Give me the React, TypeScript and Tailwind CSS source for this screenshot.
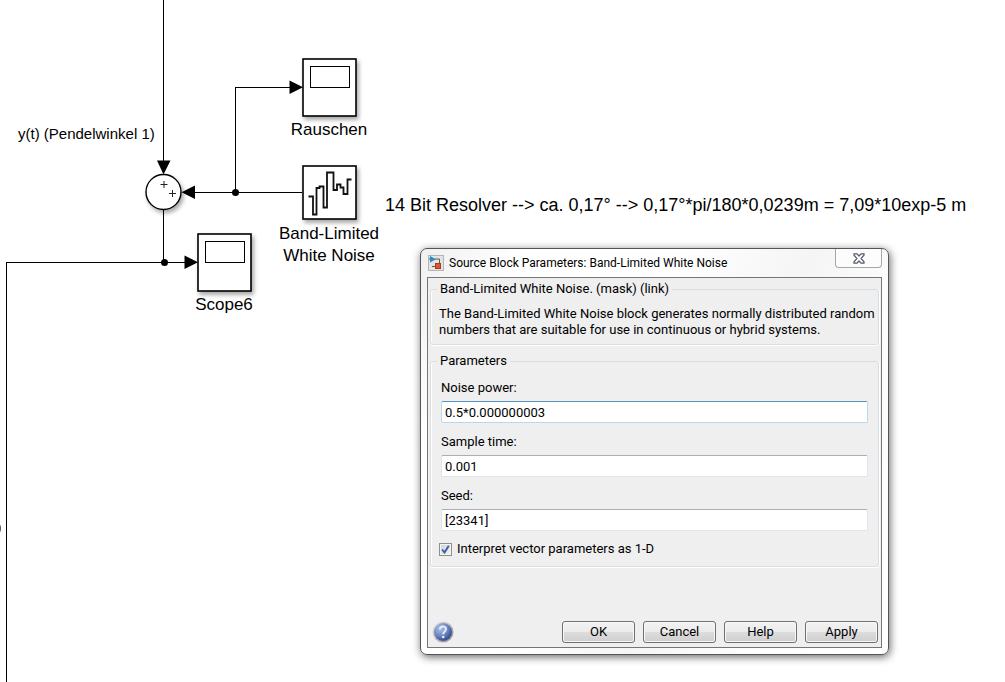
import { useState } from "react";
import type { ReactNode } from "react";

function Scope() {
  return (
    <svg width="55" height="60" viewBox="0 0 55 60" className="block overflow-visible drop-shadow-[2px_3px_2px_rgba(0,0,0,0.35)]" aria-hidden="true">
      <rect x="1" y="1" width="53" height="57" fill="#fff" stroke="#000" strokeWidth="1.6" />
      <rect x="8.5" y="8.5" width="39" height="21" fill="#fff" stroke="#000" />
    </svg>
  );
}

function Noise() {
  return (
    <svg width="55" height="55" viewBox="0 0 55 55" className="block overflow-visible drop-shadow-[2px_3px_2px_rgba(0,0,0,0.35)]" aria-hidden="true">
      <rect x="1" y="1" width="53" height="53" fill="#fff" stroke="#000" strokeWidth="1.6" />
      <path
        d="M6.500 31.500H11V49.500H14.500V23H17.500V21.500H21.500V42.500H25V7.500H31.500V25H35V19.500H38.500V22.500H41.500V29H45.500V14.500H49.500"
        fill="none"
        stroke="#111"
        strokeWidth="1.8"
      />
    </svg>
  );
}

function Wires() {
  return (
    <svg className="absolute inset-0 size-full" aria-hidden="true">
      <g stroke="#000" strokeWidth="1" fill="none" shapeRendering="crispEdges">
        <path d="M163.5 0V164" />
        <path d="M163.5 209V262.5" />
        <path d="M302 192.5H190" />
        <path d="M235.5 192V87.5H292" />
        <path d="M6.5 682V262.5H188" />
      </g>
      <path d="M157 160.500H170.500L163.500 174.500Z" />
      <path d="M195 185.500V199L181.500 192.300Z" />
      <path d="M289.500 80.500V94L303 87.300Z" />
      <path d="M184.500 255.500V269L198 262.300Z" />
      <circle cx="235.500" cy="192.500" r="3.500" />
      <circle cx="164.500" cy="262.500" r="3.500" />
      <ellipse cx="-1" cy="528.500" rx="2" ry="4" fill="#555" />
      <circle cx="163.500" cy="192" r="17.500" fill="#fff" stroke="#000" strokeWidth="1.4" className="drop-shadow-[2px_3px_2px_rgba(0,0,0,0.35)]" />
      <path d="M160.500 184.500H167.500M164 181V188M169 193.500H176M172.500 190V197" stroke="#222" />
    </svg>
  );
}

function SimulinkIcon() {
  return (
    <svg width="16" height="16" viewBox="0 0 16 16" aria-hidden="true">
      <rect x=".5" y=".5" width="15" height="15" fill="#e4e4e4" stroke="#b5b5b5" />
      <path d="M1 4H3M7 4H11.500V8M7 11.500H4" stroke="#5a5a5a" fill="none" />
      <path d="M2 1L8 4.200L2 7.500Z" fill="#2390c3" />
      <rect x="7.500" y="8.500" width="5" height="5" fill="#e0542c" stroke="#a43c20" />
    </svg>
  );
}

function HelpIcon() {
  return (
    <svg width="22" height="22" viewBox="0 0 22 22" aria-hidden="true">
      <defs>
        <radialGradient id="orb" cx=".35" cy=".3" r=".8">
          <stop offset="0" stopColor="#b3c3e6" />
          <stop offset=".5" stopColor="#6f89c2" />
          <stop offset="1" stopColor="#223c80" />
        </radialGradient>
        <linearGradient id="rim" x1="0" y1="0" x2="1" y2="1">
          <stop offset="0" stopColor="#eee" />
          <stop offset="1" stopColor="#8b8b8b" />
        </linearGradient>
      </defs>
      <circle cx="11" cy="11" r="10.500" fill="url(#rim)" />
      <circle cx="11" cy="11" r="9" fill="url(#orb)" />
      <path d="M8 8.300C8 4.500 14 4.500 14 8.200C14 10.500 11.200 10.500 11.200 13.200" fill="none" stroke="#e4eaf6" strokeWidth="2" />
      <circle cx="11.200" cy="16" r="1.300" fill="#e4eaf6" />
    </svg>
  );
}

function Group({ title, children }: { title: string; children: ReactNode }) {
  return (
    <fieldset className="min-w-0 rounded-[3px] border border-[#d5dfe5] px-1.5 shadow-[inset_1px_0_0_#fff,0_1px_0_#fff,1px_0_0_#fff]">
      <legend className="px-[3px]">{title}</legend>
      <div className="px-0.5">{children}</div>
    </fieldset>
  );
}

function Field({ id, label, initial, active }: { id: string; label: string; initial: string; active?: boolean }) {
  const [value, setValue] = useState(initial);
  return (
    <div className="flex flex-col gap-[5px]">
      <label htmlFor={id}>{label}</label>
      <input
        id={id}
        type="text"
        value={value}
        onChange={(e) => setValue(e.target.value)}
        className={
          "h-[22px] w-full rounded-[2px] border bg-white px-[3px] outline-none " +
          (active ? "border-[#b7d9ed] border-t-[#5794bf]" : "border-[#e2e3ea] border-t-[#abadb3]")
        }
      />
    </div>
  );
}

function DialogButton({ children }: { children: ReactNode }) {
  return (
    <button
      type="button"
      className="flex h-[22px] w-[73px] items-center justify-center rounded-[3px] border border-[#707070] bg-[linear-gradient(#f2f2f2_0%,#ebebeb_49%,#dddddd_50%,#cfcfcf_100%)] shadow-[inset_0_0_0_1px_#f8f8f8]"
    >
      {children}
    </button>
  );
}

function ParametersDialog() {
  const [vector, setVector] = useState(true);
  return (
    <section
      role="dialog"
      aria-labelledby="dialog-title"
      className="absolute top-[248px] left-[420px] w-[469px] rounded-[7px] border border-[#555] bg-[linear-gradient(115deg,#f0f0f0_0%,#ffffff_15%,#ffffff_40%,#f5f5f5_60%,#fcfcfc_75%,#ffffff_100%)] px-1.5 pb-1.5 font-[Roboto,'Noto_Sans',sans-serif] text-[13px] leading-4 text-black shadow-[1px_2px_8px_rgba(0,0,0,0.6)]"
    >
      <header className="flex h-7 items-start justify-between">
        <div className="flex items-center gap-[5px] pt-1.5 pl-px">
          <SimulinkIcon />
          <h1 id="dialog-title" className="text-[12px]">
            Source Block Parameters: Band-Limited White Noise
          </h1>
        </div>
        <button
          type="button"
          aria-label="Close"
          className="flex h-[19px] w-[47px] items-center justify-center rounded-b-[4px] border border-t-0 border-[#a4a8ad] bg-white/60"
        >
          <svg width="12" height="11" viewBox="0 0 12 11" aria-hidden="true">
            <path d="M1 .8H4L6 3L8 .8H11V2.200L8 5.500L11 8.800V10.200H8L6 8L4 10.200H1V8.800L4 5.500L1 2.200Z" fill="#fff" stroke="#555b6b" strokeWidth="1.2" />
          </svg>
        </button>
      </header>
      <form className="border border-[#757575] bg-[#efefef] px-0.5 pt-[3px] pb-1" onSubmit={(e) => e.preventDefault()}>
        <div className="flex flex-col gap-2">
          <Group title="Band-Limited White Noise. (mask) (link)">
            <p className="-mr-2 pt-[9px] pb-1.5">
              The Band-Limited White Noise block generates normally distributed random
              <br />
              numbers that are suitable for use in continuous or hybrid systems.
            </p>
          </Group>
          <Group title="Parameters">
            <div className="flex flex-col gap-[11px] px-0.5 pt-[11px]">
              <Field id="noise-power" label="Noise power:" initial="0.5*0.000000003" active />
              <Field id="sample-time" label="Sample time:" initial="0.001" />
              <Field id="seed" label="Seed:" initial="[23341]" />
            </div>
            <div className="flex items-center gap-[5px] pt-2.5 pb-[9px]">
              <span className="grid size-[13px] place-items-center">
                <input
                  id="vector"
                  type="checkbox"
                  checked={vector}
                  onChange={(e) => setVector(e.target.checked)}
                  className="col-start-1 row-start-1 size-[13px] appearance-none border border-[#8e8f8f] bg-[linear-gradient(135deg,#cbd0d9,#f6f6f6)] shadow-[inset_0_0_0_1px_#f4f4f4]"
                />
                {vector && (
                  <svg width="9" height="9" viewBox="0 0 9 9" className="pointer-events-none col-start-1 row-start-1" aria-hidden="true">
                    <path d="M1.200 4.500L3.500 7.500L7.800 .8" fill="none" stroke="#415a9c" strokeWidth="1.900" />
                  </svg>
                )}
              </span>
              <label htmlFor="vector">Interpret vector parameters as 1-D</label>
            </div>
          </Group>
        </div>
        <div className="mt-[54px] flex items-center justify-between pr-px pl-0.5">
          <button type="button" aria-label="Block help" className="size-[22px]">
            <HelpIcon />
          </button>
          <div className="flex gap-2">
            <DialogButton>OK</DialogButton>
            <DialogButton>Cancel</DialogButton>
            <DialogButton>Help</DialogButton>
            <DialogButton>Apply</DialogButton>
          </div>
        </div>
      </form>
    </section>
  );
}

export default function App() {
  return (
    <main className="relative min-h-screen w-full overflow-hidden bg-white font-['Liberation_Sans',Arial,sans-serif] text-[17px] leading-[22px] text-black">
      <Wires />
      <p className="absolute top-[123px] left-[18px] text-[15px] whitespace-nowrap">y(t) (Pendelwinkel 1)</p>
      <figure className="absolute top-[58px] left-[279px] flex w-[100px] flex-col items-center gap-px">
        <Scope />
        <figcaption>Rauschen</figcaption>
      </figure>
      <figure className="absolute top-[165px] left-[269px] flex w-[120px] flex-col items-center gap-[3px] text-center">
        <Noise />
        <figcaption>
          Band-Limited
          <br />
          White Noise
        </figcaption>
      </figure>
      <figure className="absolute top-[233px] left-[174px] flex w-[100px] flex-col items-center gap-px">
        <Scope />
        <figcaption>Scope6</figcaption>
      </figure>
      <p className="absolute top-[194px] left-[385px] text-[18px] whitespace-nowrap">
        14 Bit Resolver --&gt; ca. 0,17° --&gt; 0,17°*pi/180*0,0239m = 7,09*10exp-5 m
      </p>
      <ParametersDialog />
    </main>
  );
}
